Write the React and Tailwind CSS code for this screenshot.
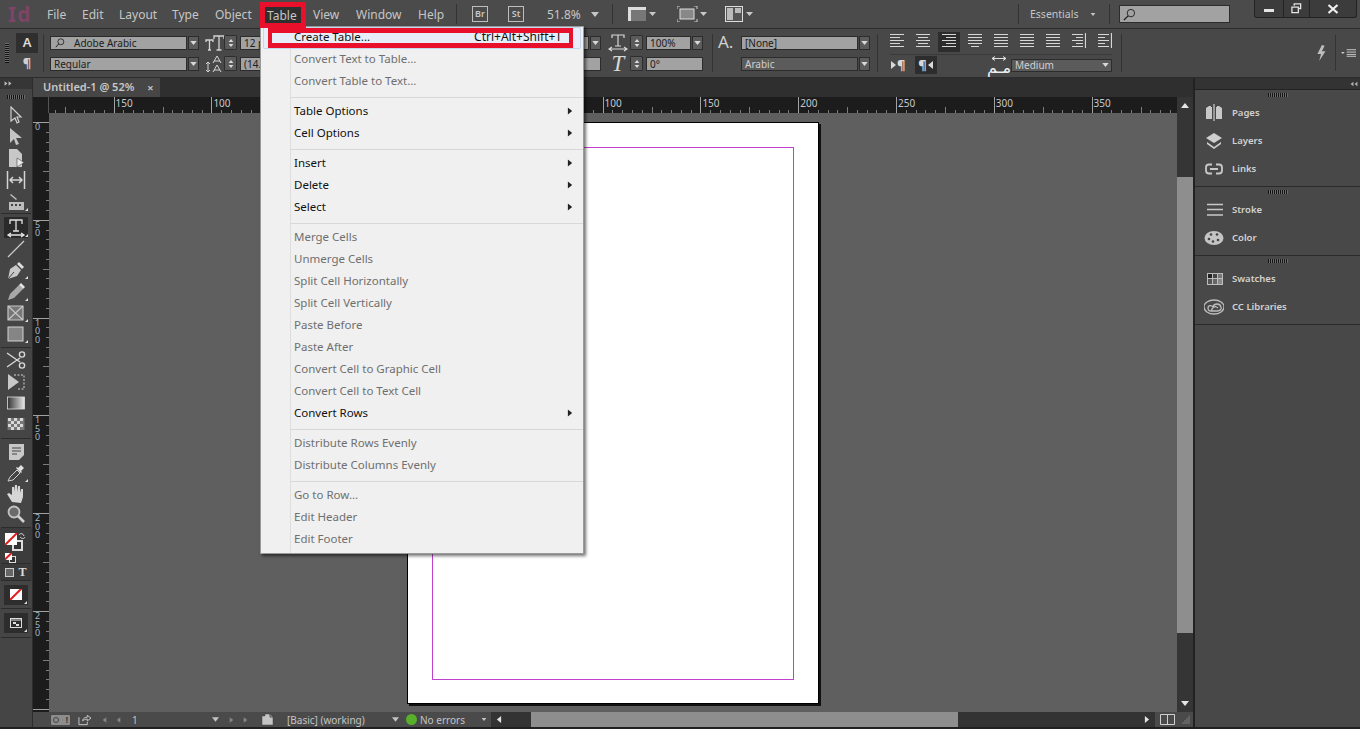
import React from "react";

const menuRows = [
  { label: "Create Table...", shortcut: "Ctrl+Alt+Shift+T", on: true, hot: true },
  { label: "Convert Text to Table..." },
  { label: "Convert Table to Text..." },
  "sep",
  { label: "Table Options", on: true, sub: true },
  { label: "Cell Options", on: true, sub: true },
  "sep",
  { label: "Insert", on: true, sub: true },
  { label: "Delete", on: true, sub: true },
  { label: "Select", on: true, sub: true },
  "sep",
  { label: "Merge Cells" },
  { label: "Unmerge Cells" },
  { label: "Split Cell Horizontally" },
  { label: "Split Cell Vertically" },
  { label: "Paste Before" },
  { label: "Paste After" },
  { label: "Convert Cell to Graphic Cell" },
  { label: "Convert Cell to Text Cell" },
  { label: "Convert Rows", on: true, sub: true },
  "sep",
  { label: "Distribute Rows Evenly" },
  { label: "Distribute Columns Evenly" },
  "sep",
  { label: "Go to Row..." },
  { label: "Edit Header" },
  { label: "Edit Footer" },
];

// arrow used everywhere: small filled triangle
const Tri = ({ dir = "down", className = "" }) => {
  const pts = { down: "0,0 8,0 4,5", up: "0,5 8,5 4,0", right: "1,0 6,4 1,8", left: "6,0 1,4 6,8" }[dir];
  const box = dir === "down" || dir === "up" ? "0 0 8 5" : "0 0 7 8";
  return (
    <svg viewBox={box} className={className}>
      <polygon points={pts} fill="currentColor" />
    </svg>
  );
};

const Grip = ({ className = "w-[20px]" }) => (
  <div
    className={`h-[4px] bg-[repeating-linear-gradient(90deg,#151515_0,#151515_1px,#6a6a6a_1px,#6a6a6a_2px)] ${className}`}
  />
);

const Stepper = () => (
  <div className="flex h-[15px] w-[13px] shrink-0 flex-col items-center justify-center gap-[2px] rounded-[1px] border border-[#2e2e2e] bg-[#5a5a5a] text-[#d8d8d8]">
    <Tri dir="up" className="h-[3px] w-[6px]" />
    <Tri className="h-[3px] w-[6px]" />
  </div>
);

const Field = ({ w, children, dark }) => (
  <div
    className={`flex h-[14px] shrink-0 items-center overflow-hidden border border-[#2c2c2c] px-[3px] text-[10px] leading-none ${w} ${
      dark ? "bg-[#5b5b5b] text-[#d0d0d0]" : "bg-[#a2a2a2] text-[#202020]"
    }`}
  >
    {children}
  </div>
);

const DropBtn = () => (
  <div className="ml-[1px] flex h-[14px] w-[11px] shrink-0 items-center justify-center border border-[#2c2c2c] bg-[#5c5c5c] text-[#d8d8d8]">
    <Tri className="h-[4px] w-[7px]" />
  </div>
);

const alignPaths = {
  full: "M0 1.5h14M0 4.5h14M0 7.5h14M0 10.5h14M0 13.5h14",
  left: "M0 1.5h14M0 4.5h10M0 7.5h14M0 10.5h10M0 13.5h14",
  center: "M0 1.5h14M2 4.5h10M0 7.5h14M2 10.5h10M0 13.5h14",
  right: "M0 1.5h14M4 4.5h10M0 7.5h14M4 10.5h10M0 13.5h14",
  last: "M0 1.5h14M0 4.5h14M0 7.5h14M0 10.5h14M3 13.5h8",
  spineA: "M0 1.5h11M4 4.5h7M0 7.5h11M4 10.5h7M0 13.5h11M13.5 0v15",
  spineB: "M0 1.5h11M0 4.5h7M0 7.5h11M0 10.5h7M0 13.5h11M13.5 0v15",
};

const AlignIcon = ({ kind }) => (
  <svg viewBox="0 0 14 15" className="h-[15px] w-[14px] shrink-0">
    <path d={alignPaths[kind]} stroke="#d6d6d6" strokeWidth="1.2" fill="none" />
  </svg>
);

const Sep = ({ className = "" }) => <div className={`w-px shrink-0 bg-[#333] ${className}`} />;

// left toolbar icons, 20x20 boxes
const toolIcons = {
  select: <path d="M5 1l10 10h-4l2 5-2 1-2-5-4 3z" fill="none" stroke="#cfcfcf" strokeWidth="1.2" />,
  direct: <path d="M4 1l12 10h-6l3 6-3 1-2-6-4 4z" fill="#c4c4c4" />,
  page: (
    <g>
      <path d="M3 1h8l5 5v13H3z" fill="#c8c8c8" />
      <path d="M11 10l7 4.5-7 4.5z" fill="#e8e8e8" stroke="#444" strokeWidth=".6" />
    </g>
  ),
  gap: <path d="M1.5 1v18M18.5 1v18M5 10h10M7 7l-3 3 3 3M13 7l3 3-3 3" stroke="#d4d4d4" strokeWidth="1.5" fill="none" />,
  collect: (
    <g fill="#bdbdbd">
      <path d="M3 10h15v8H3z" />
      <path d="M5 2l6 5-1 1-6-5z" />
      <path d="M5 12h2v2H5zM9 12h2v2H9zM13 12h2v2h-2z" fill="#444" />
    </g>
  ),
  type: (
    <path d="M4 6V2h12v4M10 2v11M7 13h6M2 17h16M5 15l-3 2 3 2M15 15l3 2-3 2" stroke="#e4e4e4" strokeWidth="1.3" fill="none" />
  ),
  line: <path d="M2 18L18 2" stroke="#cfcfcf" strokeWidth="1.2" />,
  pen: (
    <g>
      <path d="M2 19l2-10 6-4 5 5-4 6z" fill="#c8c8c8" />
      <path d="M11 4l2-2 5 5-2 2z" fill="#e0e0e0" />
      <path d="M2 19l6-7" stroke="#444" />
    </g>
  ),
  pencil: (
    <g>
      <path d="M2 18l2-6 9-9 4 4-9 9z" fill="#a8a8a8" />
      <path d="M13 3l2-2 4 4-2 2z" fill="#e4e4e4" />
    </g>
  ),
  frame: <path d="M2 3h15v14H2zM2 3l15 14M17 3L2 17" stroke="#c6c6c6" strokeWidth="1.2" fill="#777" />,
  rect: <rect x="2" y="3" width="15" height="14" fill="#858585" stroke="#d2d2d2" strokeWidth="1" />,
  scissors: (
    <g stroke="#d8d8d8" strokeWidth="1.4" fill="none">
      <circle cx="16" cy="4.5" r="2.6" />
      <circle cx="16" cy="15.5" r="2.6" />
      <path d="M1 3l13 9M1 17l13-9" />
    </g>
  ),
  free: (
    <g>
      <path d="M2 2l11 8-11 8z" fill="#c8c8c8" />
      <path d="M8 3h10v14H12" stroke="#d4d4d4" strokeDasharray="2 1.5" fill="none" />
    </g>
  ),
  gradient: (
    <g>
      <defs>
        <linearGradient id="grd">
          <stop offset="0" stopColor="#333" />
          <stop offset="1" stopColor="#e8e8e8" />
        </linearGradient>
      </defs>
      <rect x="1.5" y="4" width="17" height="12" fill="url(#grd)" stroke="#ddd" strokeWidth=".8" />
    </g>
  ),
  feather: (
    <g>
      <rect x="1.5" y="4" width="17" height="12" fill="#777" />
      <path d="M2 4h3v3H2zM8 4h3v3H8zM14 4h3v3h-3zM5 7h3v3H5zM11 7h3v3h-3zM2 10h3v3H2zM8 10h3v3H8zM14 10h3v3h-3zM5 13h3v3H5zM11 13h3v3h-3z" fill="#d8d8d8" />
    </g>
  ),
  note: (
    <g>
      <path d="M3 2h15v11l-5 5H3z" fill="#c8c8c8" />
      <path d="M6 6h9M6 9h9M6 12h5" stroke="#444" />
    </g>
  ),
  eyedrop: (
    <g>
      <path d="M2 18l2-4 7-7 3 3-7 7z" fill="none" stroke="#d0d0d0" />
      <path d="M12 5l3-3 3 3-3 3 1 1-1 1-5-5 1-1z" fill="#e0e0e0" />
    </g>
  ),
  hand: <path d="M6 19l-5-8 2-1 3 2V4h2v5l1-7h2v7l1-6h2v7l1-4h2v8l-2 6z" fill="#d6d6d6" />,
  zoom: (
    <g>
      <circle cx="8" cy="8" r="5.5" fill="#6b6b6b" stroke="#c4c4c4" strokeWidth="1.8" />
      <path d="M12 12l6 6" stroke="#cfcfcf" strokeWidth="2.6" />
    </g>
  ),
};

const Tool = ({ name, h = "h-[21px]", corner, on }) => (
  <div className={`flex shrink-0 justify-center ${h}`}>
    <div className={`relative flex h-[21px] w-[24px] items-center justify-center ${on ? "bg-[#2a2a2a]" : ""}`}>
      <svg viewBox="0 0 20 20" className="h-[20px] w-[20px]">
        {toolIcons[name]}
      </svg>
      {corner && <div className="absolute bottom-[1px] right-0 h-0 w-0 border-b-[3px] border-l-[3px] border-b-[#ddd] border-l-transparent" />}
    </div>
  </div>
);

const ToolSep = () => <div className="mx-[1px] h-px shrink-0 bg-[#2c2c2c]" />;

const hTicks = [];
for (let i = -36; i < 79; i++) hTicks.push(i);

const hLabels = [
  [-30, "150"],
  [-20, "100"],
  [20, "100"],
  [30, "150"],
  [40, "200"],
  [50, "250"],
  [60, "300"],
  [70, "350"],
];

const HRuler = () => (
  <svg className="h-[16px] w-[1128px] shrink-0" viewBox="0 0 1128 16">
    {hTicks.map((i) => {
      const x = Math.round(358 + i * 9.78) + 0.5;
      const major = i % 10 === 0;
      const mid = i % 5 === 0;
      return <line key={i} x1={x} x2={x} y1={major ? 0 : mid ? 10 : 13} y2={16} stroke="#b0b0b0" strokeWidth="1" opacity={major ? 0.9 : 0.65} />;
    })}
    {hLabels.map(([i, t]) => (
      <text key={i} x={358 + i * 9.78 + 2} y={10} fontSize="10" fill="#c4c8cc" fontFamily="Noto Sans, sans-serif">
        {t}
      </text>
    ))}
  </svg>
);

const vTicks = [];
for (let i = -1; i < 61; i++) vTicks.push(i);

const vLabels = [
  [0, "0"],
  [10, "50"],
  [20, "100"],
  [30, "150"],
  [40, "200"],
  [50, "250"],
];

const VRuler = () => (
  <div className="relative h-full w-[16px] overflow-hidden bg-[#1c1c1c]">
    <svg className="h-[600px] w-[16px]" viewBox="0 0 16 600">
      {vTicks.map((i) => {
        const y = Math.round(9 + i * 9.78) + 0.5;
        const major = i % 10 === 0;
        const mid = i % 5 === 0;
        return <line key={i} x1={major ? 0 : mid ? 10 : 13} x2={16} y1={y} y2={y} stroke="#b0b0b0" opacity={major ? 0.9 : 0.65} />;
      })}
    </svg>
    {vLabels.map(([i, t]) => (
      <div
        key={i}
        className="absolute left-[2px] w-[6px] break-all text-[9px] leading-[8.5px] text-[#a0b8c8]"
        style={{ top: 10 + i * 9.78 }}
      >
        {t}
      </div>
    ))}
  </div>
);

const panelIcons = {
  pages: (
    <g>
      <path d="M2 5l3-2h2v1h1v12H2zM18 5l-3-2h-2v1h-1v12h6z" fill="#c8c8c8" />
      <path d="M10 1v17" stroke="#e8e8e8" />
    </g>
  ),
  layers: (
    <g>
      <path d="M10 2l8 5-8 5-8-5z" fill="#cfcfcf" />
      <path d="M3 11l7 5 7-5v2l-7 5-7-5z" fill="#cfcfcf" />
    </g>
  ),
  links: <path d="M8 5.5H5a3 3 0 00-3 3v3a3 3 0 003 3h3M12 5.5h3a3 3 0 013 3v3a3 3 0 01-3 3h-3M6 10h8" stroke="#c8c8c8" strokeWidth="1.8" fill="none" />,
  stroke: <path d="M3 4.5h16M3 9.5h16M3 15h16" stroke="#c8c8c8" strokeWidth="1.6" />,
  color: (
    <g>
      <ellipse cx="10" cy="10" rx="9.5" ry="7" fill="#c4c4c4" />
      <circle cx="5" cy="11" r="1.3" fill="#444" />
      <circle cx="9" cy="13.5" r="1.3" fill="#444" />
      <circle cx="14" cy="12" r="1.3" fill="#444" />
      <circle cx="13" cy="6.5" r="1.3" fill="#444" />
      <circle cx="7" cy="6.5" r="1.3" fill="#444" />
    </g>
  ),
  swatches: (
    <g>
      <path d="M3 4h16v12H3z" fill="#bdbdbd" />
      <path d="M4 5h4v4H4z" fill="#222" />
      <path d="M9 5h4v4H9z" fill="#444" />
      <path d="M14 5h4v4h-4z" fill="#777" />
      <path d="M4 10h4v5H4z" fill="#555" />
      <path d="M9 10h4v5H9z" fill="#666" />
      <path d="M14 10h4v5h-4z" fill="#8a8a8a" />
    </g>
  ),
  cc: (
    <g stroke="#bcbcbc" strokeWidth="1.3" fill="none">
      <ellipse cx="10" cy="10" rx="10" ry="7" />
      <path d="M4 11c0-3 4-3 5-1 1-4 7-4 8 0 1 3-2 4-4 4H7c-2 0-3-1-3-3zM8 14c-1-3 3-6 6-3" />
    </g>
  ),
};

const PanelRow = ({ icon, label }) => (
  <div className="flex h-[28px] items-center pl-[9px]">
    <svg viewBox="0 0 20 20" className="h-[20px] w-[20px] shrink-0">
      {panelIcons[icon]}
    </svg>
    <span className="ml-[8px] text-[9.5px] font-semibold text-[#d2d2d2]">{label}</span>
  </div>
);

const PanelGroup = ({ children }) => (
  <div className="border-b border-[#2b2b2b] pb-[3px]">
    <div className="flex h-[9px] items-center justify-center">
      <Grip />
    </div>
    {children}
  </div>
);

export default function App() {
  return (
    <div className="relative flex h-[729px] w-[1360px] flex-col overflow-hidden bg-[#1f1f24] font-['Noto_Sans','Open_Sans',sans-serif] text-[#c6c6c6]">
      {/* application bar */}
      <div className="flex h-[29px] shrink-0 items-center border-b border-[#2c2c2c] bg-[#4b4b4b] text-[12px]">
        <span className="ml-[8px] w-[39px] text-[21px] font-bold leading-none tracking-[1px] text-[#7d4466]">Id</span>
        <div className="mt-[2px] flex">
          <span className="w-[35px]">File</span>
          <span className="w-[37px]">Edit</span>
          <span className="w-[53px]">Layout</span>
          <span className="w-[43px]">Type</span>
          <span className="w-[52px]">Object</span>
          <span className="w-[46px]">Table</span>
          <span className="w-[43px]">View</span>
          <span className="w-[62px]">Window</span>
          <span className="w-[38px]">Help</span>
        </div>
        <Sep className="h-[20px]" />
        <div className="ml-[15px] flex h-[16px] w-[16px] items-center justify-center border border-[#bdbdbd] text-[9px] font-semibold">Br</div>
        <div className="ml-[20px] flex h-[16px] w-[16px] items-center justify-center border border-[#bdbdbd] text-[9px] font-semibold">St</div>
        <span className="ml-[23px] mt-[2px] w-[44px] text-[12px]">51.8%</span>
        <Tri className="h-[5px] w-[8px]" />
        <Sep className="ml-[13px] h-[20px]" />
        <svg viewBox="0 0 28 16" className="ml-[15px] h-[16px] w-[28px]">
          <rect x="0" y="1" width="18" height="14" fill="#777" />
          <path d="M0 1h18v3H0zM0 1h3v14H0z" fill="#ddd" />
          <polygon points="21,6 28,6 24.5,10" fill="#c8c8c8" />
        </svg>
        <svg viewBox="0 0 30 16" className="ml-[21px] h-[16px] w-[30px]">
          <rect x="3" y="3" width="14" height="10" fill="#888" stroke="#ddd" />
          <path d="M0 3V0h3M17 0h3v3M0 13v3h3M20 13v3h-3" stroke="#ccc" fill="none" />
          <polygon points="23,6 30,6 26.5,10" fill="#c8c8c8" />
        </svg>
        <svg viewBox="0 0 28 16" className="ml-[18px] h-[16px] w-[28px]">
          <rect x="0.5" y="0.5" width="17" height="15" fill="#555" stroke="#ddd" />
          <path d="M2 2h6v12H2zM10 2h6v5h-6z" fill="#bbb" />
          <polygon points="21,6 28,6 24.5,10" fill="#c8c8c8" />
        </svg>
        <Sep className="ml-[265px] h-[20px]" />
        <span className="ml-[11px] mt-[2px] w-[60px] text-[10.5px]">Essentials</span>
        <Tri className="h-[3px] w-[6px]" />
        <Sep className="ml-[13px] h-[20px]" />
        <div className="ml-[9px] flex h-[18px] w-[111px] items-center border border-[#2c2c2c] bg-[#a2a2a2] pl-[3px]">
          <svg viewBox="0 0 14 14" className="h-[13px] w-[13px]">
            <circle cx="8.5" cy="5.5" r="4" fill="none" stroke="#222" />
            <path d="M5.5 8.5L1 13" stroke="#222" strokeWidth="1.4" />
          </svg>
        </div>
        <div className="ml-[24px] flex h-[18px] w-[103px] self-start rounded-b-[3px] border border-t-0 border-[#222] bg-[#3c3c3c] text-[#e4e4e4]">
          <div className="flex h-full w-[29px] items-center justify-center border-r border-[#222]">
            <div className="mt-[4px] h-[3px] w-[10px] bg-[#e4e4e4]" />
          </div>
          <div className="flex h-full w-[26px] items-center justify-center border-r border-[#222]">
            <svg viewBox="0 0 12 12" className="h-[11px] w-[11px]">
              <path d="M3.5 3V1h7v5h-3M1 4.5h7v6H1z" fill="none" stroke="#e4e4e4" strokeWidth="1.4" />
            </svg>
          </div>
          <div className="flex h-full flex-1 items-center justify-center">
            <svg viewBox="0 0 12 10" className="h-[10px] w-[12px]">
              <path d="M1.5 1l9 8M10.5 1l-9 8" stroke="#f0f0f0" strokeWidth="2.2" />
            </svg>
          </div>
        </div>
      </div>

      {/* control panel */}
      <div className="flex h-[49px] shrink-0 items-center border-b border-[#2c2c2c] bg-[#484848]">
        <div className="ml-[5px] h-[20px] w-[4px] bg-[repeating-linear-gradient(0deg,#151515_0,#151515_1px,#6a6a6a_1px,#6a6a6a_2px)]" />
        <div className="ml-[7px] flex w-[22px] flex-col items-center">
          <div className="flex h-[20px] w-[22px] items-center justify-center bg-[#2f2f2f] text-[13px] font-semibold text-[#dcdcdc]">A</div>
          <div className="mt-[1px] flex h-[20px] items-center justify-center text-[13px] font-bold text-[#d0d0d0]">¶</div>
        </div>
        <Sep className="ml-[5px] h-[38px]" />
        <div className="ml-[6px] mt-[1px] flex w-[150px] flex-col gap-[7px]">
          <div className="flex items-center">
            <div className="flex h-[14px] w-[137px] items-center border border-[#2c2c2c] bg-[#a2a2a2] text-[10px] text-[#202020]">
              <svg viewBox="0 0 14 12" className="ml-[2px] h-[10px] w-[14px] shrink-0">
                <circle cx="8" cy="4.5" r="3.6" fill="none" stroke="#222" />
                <path d="M5.5 7L2 11" stroke="#222" strokeWidth="1.2" />
              </svg>
              <span className="ml-[7px] leading-none">Adobe Arabic</span>
            </div>
            <DropBtn />
          </div>
          <div className="flex items-center">
            <div className="flex h-[14px] w-[137px] items-center border border-[#2c2c2c] bg-[#a2a2a2] pl-[3px] text-[10px] leading-none text-[#202020]">Regular</div>
            <DropBtn />
          </div>
        </div>
        <div className="ml-[5px] flex w-[20px] flex-col items-center gap-[3px] text-[#d4d4d4]">
          <svg viewBox="0 0 20 18" className="h-[18px] w-[20px]">
            <path d="M1 8V6h7v2M4.5 6v10M3 16h3M9 5V2h10v3M14 2v14M11.5 16h5" stroke="#d4d4d4" fill="none" strokeWidth="1.3" />
          </svg>
          <svg viewBox="0 0 20 18" className="h-[18px] w-[20px]">
            <path d="M3 7v10M1 9l2-2 2 2M1 15l2 2 2-2" stroke="#d4d4d4" fill="none" />
            <path d="M8 8l4-7 4 7M9 6h6M8 17l4-7 4 7M9 15h6" stroke="#d4d4d4" fill="none" />
          </svg>
        </div>
        <div className="-ml-[1px] flex w-[13px] flex-col gap-[6px]">
          <Stepper />
          <Stepper />
        </div>
        <div className="ml-[3px] mt-[1px] flex w-[361px] flex-col gap-[7px]">
          <div className="flex">
            <Field w="w-[349px]">12 pt</Field>
            <DropBtn />
          </div>
          <Field w="w-[361px]">(14.4 pt)</Field>
        </div>
        <div className="ml-[7px] flex w-[20px] flex-col items-center gap-[3px]">
          <svg viewBox="0 0 20 18" className="h-[18px] w-[20px]">
            <path d="M4 4V1h12v3M10 1v11M7 12h6M1 15h18M4 13l-3 2 3 2M16 13l3 2-3 2" stroke="#d8d8d8" fill="none" strokeWidth="1.2" />
          </svg>
          <span className="h-[18px] font-['Liberation_Serif',serif] text-[23px] italic leading-[18px] text-[#d8d8d8]">T</span>
        </div>
        <div className="ml-[2px] flex w-[13px] flex-col gap-[6px]">
          <Stepper />
          <Stepper />
        </div>
        <div className="ml-[3px] mt-[1px] flex w-[57px] flex-col gap-[7px]">
          <div className="flex">
            <Field w="w-[45px]">100%</Field>
            <DropBtn />
          </div>
          <Field w="w-[57px]">0°</Field>
        </div>
        <Sep className="ml-[9px] h-[38px]" />
        <div className="ml-[5px] flex w-[23px] self-start pt-[3px] text-[17px] leading-[20px] text-[#cfcfcf]">A.</div>
        <div className="mt-[1px] flex w-[129px] flex-col gap-[7px]">
          <div className="flex">
            <Field w="w-[117px]">[None]</Field>
            <DropBtn />
          </div>
          <div className="flex">
            <Field w="w-[117px]" dark>Arabic</Field>
            <DropBtn />
          </div>
        </div>
        <Sep className="ml-[7px] h-[38px]" />
        <div className="ml-[12px] flex w-[222px] flex-col self-start pt-[3px]">
          <div className="flex h-[23px] items-start gap-[12px] border-b border-[#3a3a3a] pt-[1px]">
            <AlignIcon kind="left" />
            <AlignIcon kind="center" />
            <div className="-mx-[4px] -mt-[1px] flex h-[20px] w-[22px] shrink-0 items-start justify-center bg-[#2d2d2d] pt-[1px]">
              <AlignIcon kind="right" />
            </div>
            <AlignIcon kind="last" />
            <AlignIcon kind="full" />
            <AlignIcon kind="full" />
            <AlignIcon kind="full" />
            <AlignIcon kind="spineA" />
            <AlignIcon kind="spineB" />
          </div>
          <div className="mt-[1px] flex h-[18px] items-center">
            <span className="flex w-[25px] items-center text-[13px] font-bold leading-none text-[#d8d8d8]">
              <Tri dir="right" className="h-[10px] w-[7px]" />¶
            </span>
            <span className="flex h-[18px] w-[22px] items-center justify-center bg-[#2d2d2d] text-[13px] font-bold leading-none text-[#d8d8d8]">
              ¶<Tri dir="left" className="h-[10px] w-[7px]" />
            </span>
            <span className="ml-[50px] flex h-[18px] w-[24px] flex-col items-center">
              <svg viewBox="0 0 14 5" className="h-[5px] w-[14px] shrink-0">
                <path d="M0 2.5h14M3 .5L0 2.5l3 2M11 .5l3 2-3 2" stroke="#e0e0e0" fill="none" />
              </svg>
              <span className="whitespace-nowrap font-['DejaVu_Sans',sans-serif] text-[16px] leading-[13px] text-[#f0f0f0]">مـم</span>
            </span>
            <div className="flex h-[13px] w-[101px] items-center border border-[#2c2c2c] bg-[#5b5b5b] text-[#d8d8d8]">
              <span className="flex-1 pl-[3px] text-[10px] leading-none text-[#d0d0d0]">Medium</span>
              <Tri className="mr-[2px] h-[4px] w-[7px]" />
            </div>
          </div>
        </div>
        <Sep className="ml-[9px] h-[38px]" />
        <svg viewBox="0 0 12 20" className="ml-[193px] h-[18px] w-[12px]">
          <path d="M7 1L2 11h4l-2 8 7-11H7l3-6z" fill="#bdbdbd" />
        </svg>
        <Sep className="ml-[8px] h-[36px]" />
        <svg viewBox="0 0 16 8" className="ml-[5px] h-[8px] w-[15px]">
          <polygon points="0,3 4,3 2,5" fill="#ccc" />
          <path d="M6 .5h10M6 3h10M6 5.5h10M6 7.5h10" stroke="#ccc" />
        </svg>
      </div>

      {/* work area */}
      <div className="flex min-h-0 flex-1">
        {/* tools */}
        <div className="flex w-[33px] shrink-0 flex-col border-r border-[#2c2c2c] bg-[#454545]">
          <div className="flex h-[11px] items-center bg-[#363636] pl-[4px] text-[#bdbdbd]">
            <Tri dir="right" className="h-[5px] w-[4px]" />
            <Tri dir="right" className="h-[5px] w-[4px]" />
          </div>
          <div className="flex h-[16px] items-center justify-center">
            <Grip className="w-[18px]" />
          </div>
          <Tool name="select" />
          <Tool name="direct" />
          <Tool name="page" h="h-[22px]" />
          <Tool name="gap" h="h-[22px]" />
          <Tool name="collect" h="h-[22px]" corner />
          <ToolSep />
          <Tool name="type" h="mt-[3px] h-[21px]" on corner />
          <Tool name="line" />
          <Tool name="pen" h="h-[22px]" corner />
          <Tool name="pencil" corner />
          <Tool name="frame" corner />
          <Tool name="rect" h="h-[24px]" corner />
          <ToolSep />
          <Tool name="scissors" h="mt-[1px] h-[22px]" />
          <Tool name="free" />
          <Tool name="gradient" />
          <Tool name="feather" h="h-[25px]" />
          <ToolSep />
          <Tool name="note" h="mt-[2px] h-[21px]" />
          <Tool name="eyedrop" h="h-[20px]" corner />
          <Tool name="hand" />
          <Tool name="zoom" h="h-[24px]" />
          <ToolSep />
          <div className="relative h-[35px] shrink-0 bg-[#3c3c3c]">
            <div className="absolute left-[12px] top-[12px] h-[11px] w-[11px] border-2 border-[#ddd] bg-[#333]" />
            <div className="absolute left-[5px] top-[5px] h-[12px] w-[12px] overflow-hidden bg-white">
              <div className="absolute left-[-3px] top-[5px] h-[2px] w-[18px] -rotate-45 bg-[#e02020]" />
            </div>
            <svg viewBox="0 0 8 8" className="absolute left-[18px] top-[4px] h-[8px] w-[8px]">
              <path d="M1 3c1-2 4-2 5 1M7 5c-1 2-3 2-5 0" fill="none" stroke="#ddd" />
            </svg>
            <div className="absolute left-[9px] top-[28px] h-[7px] w-[7px] border border-[#ddd] bg-[#333]" />
            <div className="absolute left-[5px] top-[25px] h-[7px] w-[7px] overflow-hidden bg-white">
              <div className="absolute left-[-2px] top-[2px] h-[2px] w-[11px] -rotate-45 bg-[#e02020]" />
            </div>
          </div>
          <ToolSep />
          <div className="flex h-[16px] shrink-0 items-center justify-center gap-[4px] bg-[#3a3a3a]">
            <div className="h-[9px] w-[9px] border border-[#ccc] bg-[#666]" />
            <span className="font-['Liberation_Serif',serif] text-[12px] font-bold leading-none text-[#ddd]">T</span>
          </div>
          <ToolSep />
          <div className="flex h-[27px] shrink-0 items-center justify-center">
            <div className="relative flex h-[20px] w-[24px] items-center justify-center bg-[#2d2d2d]">
              <div className="relative h-[11px] w-[12px] overflow-hidden bg-white">
                <div className="absolute left-[-3px] top-[4px] h-[2px] w-[18px] -rotate-45 bg-[#e02020]" />
              </div>
              <div className="absolute bottom-[1px] right-[1px] h-0 w-0 border-b-[3px] border-l-[3px] border-b-[#ddd] border-l-transparent" />
            </div>
          </div>
          <ToolSep />
          <div className="flex h-[28px] shrink-0 items-center justify-center">
            <div className="relative flex h-[20px] w-[24px] items-center justify-center bg-[#2d2d2d]">
              <svg viewBox="0 0 12 10" className="h-[10px] w-[12px]">
                <rect x=".5" y=".5" width="11" height="9" fill="none" stroke="#ddd" />
                <path d="M0 2h12" stroke="#ddd" />
                <path d="M3 4h3v2H3zM6 6h3v2H6z" fill="#ddd" />
              </svg>
              <div className="absolute bottom-[1px] right-[1px] h-0 w-0 border-b-[3px] border-l-[3px] border-b-[#ddd] border-l-transparent" />
            </div>
          </div>
          <ToolSep />
        </div>

        {/* document column */}
        <div className="flex w-[1160px] shrink-0 flex-col">
          <div className="flex h-[19px] shrink-0 bg-[#2f2f2f]">
            <div className="flex h-[19px] w-[127px] items-center bg-[#464646] pl-[10px] text-[11px] font-semibold text-[#c8c8c8]">
              <span>Untitled-1 @ 52%</span>
              <span className="ml-[13px] text-[11px] leading-none">×</span>
            </div>
          </div>
          <div className="flex min-h-0 flex-1">
            <div className="flex w-[1144px] flex-col">
              <div className="flex h-[16px] shrink-0 bg-[#1c1c1c]">
                <div className="h-[16px] w-[16px] border-r border-[#555]" />
                <HRuler />
              </div>
              <div className="flex min-h-0 flex-1">
                <div className="w-[16px] shrink-0">
                  <VRuler />
                </div>
                <div className="min-w-0 flex-1 overflow-hidden bg-[#5f5f5f] pl-[358px] pt-[9px]">
                  <div className="h-[582px] w-[412px] border border-black bg-white pl-[24px] pr-[24px] pt-[24px] shadow-[2px_2px_0_#111]">
                    <div className="h-[533px] w-[362px] border border-[#c040d0]" />
                  </div>
                </div>
              </div>
              {/* status bar */}
              <div className="flex h-[15px] shrink-0 items-center bg-[#4a4a4a] text-[10px] text-[#c4c4c4]">
                <div className="ml-[18px] flex h-[10px] w-[19px] items-center justify-between rounded-[1px] bg-[#8c8c8c] px-[2px] text-[8px] font-bold leading-none text-[#333]">
                  <span className="h-[6px] w-[6px] rounded-full border border-[#444]" />
                  <span>!</span>
                </div>
                <svg viewBox="0 0 14 12" className="ml-[8px] h-[12px] w-[13px]">
                  <path d="M1 3v8h9V8M5 7c0-3 3-4 5-4V1l4 3-4 3V5c-2 0-4 1-5 2z" stroke="#ccc" fill="none" />
                </svg>
                <span className="ml-[11px] flex items-center gap-[9px] text-[#858585]">
                  <Tri dir="left" className="h-[8px] w-[5px]" />
                  <Tri dir="left" className="h-[8px] w-[5px]" />
                </span>
                <span className="ml-[11px] w-[80px] leading-none">1</span>
                <Tri className="h-[5px] w-[7px]" />
                <span className="ml-[10px] flex items-center gap-[9px] text-[#858585]">
                  <Tri dir="right" className="h-[8px] w-[5px]" />
                  <Tri dir="right" className="h-[8px] w-[5px]" />
                </span>
                <svg viewBox="0 0 14 13" className="ml-[13px] h-[13px] w-[14px]">
                  <path d="M1 3h3V1h5l3 3v8H1z" fill="#c4c4c4" stroke="#444" strokeWidth=".5" />
                  <path d="M9 1v3h3" fill="none" stroke="#444" />
                </svg>
                <span className="ml-[12px] w-[105px] leading-none">[Basic] (working)</span>
                <Tri className="h-[5px] w-[7px]" />
                <span className="ml-[7px] h-[11px] w-[11px] rounded-full bg-[#58b02a]" />
                <span className="ml-[3px] w-[61px] leading-none">No errors</span>
                <Tri className="h-[3px] w-[6px]" />
                <div className="ml-[4px] flex h-[15px] w-[664px] shrink-0 items-center bg-[#333]">
                  <Tri dir="left" className="ml-[5px] h-[9px] w-[6px] text-[#e4e4e4]" />
                  <div className="ml-[29px] h-[15px] w-[427px] bg-[#8e8e8e]" />
                  <Tri dir="right" className="ml-[186px] h-[9px] w-[6px] text-[#e4e4e4]" />
                </div>
                <svg viewBox="0 0 15 11" className="ml-[5px] h-[11px] w-[15px]">
                  <path d="M.5.5h14v10H.5zM7.5.5v10" fill="none" stroke="#d0d0d0" />
                </svg>
              </div>
            </div>
            {/* vertical scrollbar */}
            <div className="flex w-[16px] shrink-0 flex-col">
              <div className="flex min-h-0 flex-1 flex-col items-center bg-[#353535]">
                <Tri dir="up" className="mt-[6px] h-[5px] w-[8px] text-[#e4e4e4]" />
                <div className="mt-[69px] h-[456px] w-full bg-[#8e8e8e]" />
                <Tri className="mt-[68px] h-[5px] w-[8px] text-[#e4e4e4]" />
              </div>
              <div className="flex h-[15px] shrink-0 items-center justify-end bg-[#4a4a4a] pr-[3px]">
                <svg viewBox="0 0 9 9" className="h-[9px] w-[9px]">
                  <path d="M8 8h.01M6 8h.01M4 8h.01M2 8h.01M8 6h.01M6 6h.01M4 6h.01M8 4h.01M6 4h.01M8 2h.01" stroke="#c8c8c8" strokeLinecap="round" />
                </svg>
              </div>
            </div>
          </div>
        </div>

        {/* panel dock */}
        <div className="flex min-w-0 flex-1 flex-col border-l-2 border-[#222] bg-[#484848]">
          <div className="flex h-[12px] shrink-0 items-center justify-end border-b border-[#222] bg-[#333] pr-[2px] text-[#b0b0b0]">
            <Tri dir="left" className="h-[6px] w-[4px]" />
            <Tri dir="left" className="h-[6px] w-[4px]" />
          </div>
          <PanelGroup>
            <PanelRow icon="pages" label="Pages" />
            <PanelRow icon="layers" label="Layers" />
            <PanelRow icon="links" label="Links" />
          </PanelGroup>
          <PanelGroup>
            <PanelRow icon="stroke" label="Stroke" />
            <PanelRow icon="color" label="Color" />
          </PanelGroup>
          <PanelGroup>
            <PanelRow icon="swatches" label="Swatches" />
            <PanelRow icon="cc" label="CC Libraries" />
          </PanelGroup>
        </div>
      </div>
      <div className="h-[2px] shrink-0 bg-[#1f1f24]" />

      {/* Table menu, open over the page */}
      <div className="absolute left-[260px] top-[26px] w-[324px] border border-[#9a9a9a] bg-[#f0f0f0] pb-[2px] shadow-[2px_2px_3px_rgba(0,0,0,0.55)]">
        <div className="absolute bottom-0 left-[29px] top-0 w-px bg-[#dedede]" />
        {menuRows.map((row, i) =>
          row === "sep" ? (
            <div key={i} className="flex h-[8px] items-center pl-[30px]">
              <div className="h-px w-full bg-[#d8d8d8]" />
            </div>
          ) : (
            <div
              key={i}
              className={`relative flex h-[22px] items-center justify-between pb-[2px] pr-[10px] text-[11.5px] ${
                row.on ? "text-[#111]" : "text-[#6f6f6f]"
              } ${row.hot ? "mx-[2px] rounded-[2px] border border-[#c5d7ee] bg-[#e8eef7] pl-[30px]" : "pl-[33px]"}`}
            >
              <span>{row.label}</span>
              {row.shortcut && <span className="mr-[8px] text-[12px]">{row.shortcut}</span>}
              {row.sub && <Tri dir="right" className="h-[8px] w-[6px] text-[#222]" />}
            </div>
          )
        )}
      </div>

      {/* red callouts from the tutorial */}
      <div className="absolute left-[260px] top-[2px] flex h-[26px] w-[46px] items-center border-[5px] border-[#e8102a] bg-[#2f2f2f] pl-[2px] pt-[1px] text-[12px] text-[#c6c6c6]">
        Table
      </div>
      <div className="absolute left-[268px] top-[28px] h-[20px] w-[305px] border-x-[4px] border-y-[5px] border-[#e8102a]" />
    </div>
  );
}
